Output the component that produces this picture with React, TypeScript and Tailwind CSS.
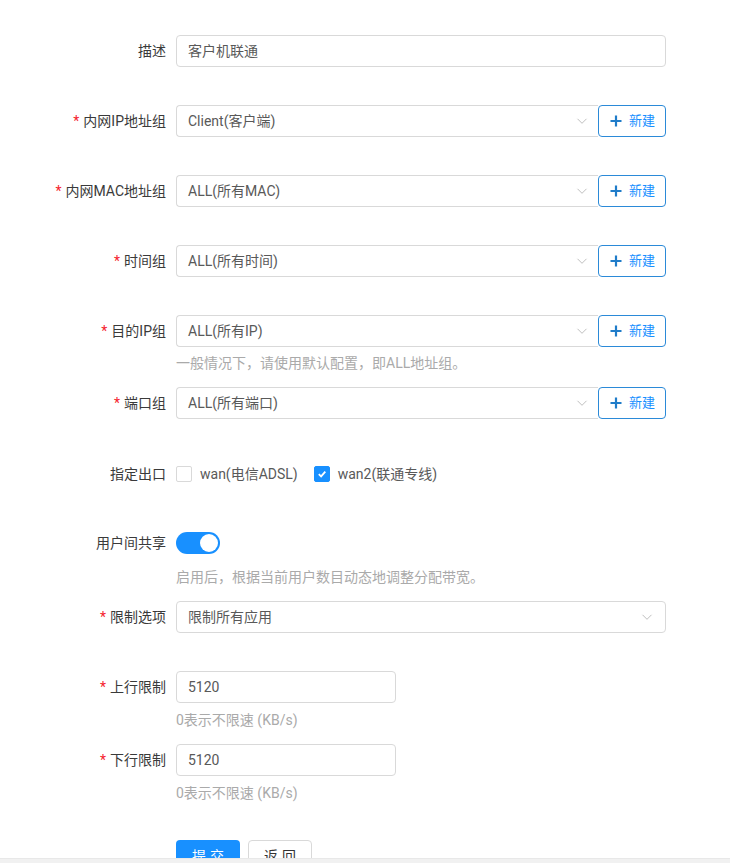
import { ReactNode } from "react";

function Label({ text, required }: { text: string; required?: boolean }) {
  return (
    <div className="w-[166px] shrink-0 h-8 flex items-center justify-end pr-0 text-[14px] text-[#3a3a3a]">
      {required && <span className="text-[#f5222d] mr-1 text-[14px] font-[SimSun,'Liberation Sans',sans-serif]">*</span>}
      <span>{text}</span>
    </div>
  );
}

function Item({ label, required, className, children }: { label: string; required?: boolean; className?: string; children: ReactNode }) {
  return (
    <div className={`flex ${className ?? ""}`}>
      <Label text={label} required={required} />
      <div className="ml-[10px] flex-1">{children}</div>
    </div>
  );
}

function Chevron() {
  return (
    <svg width="12" height="12" viewBox="0 0 12 12" className="text-[#bfbfbf]">
      <path d="M1.5 3.8 L6 8.3 L10.5 3.8" fill="none" stroke="currentColor" strokeWidth="1" />
    </svg>
  );
}

function SelectWithAdd({ value }: { value: string }) {
  return (
    <div className="flex w-[490px] h-8">
      <div className="flex-1 flex items-center justify-between pl-[11px] pr-[10px] border border-[#d9d9d9] border-r-0 rounded-l text-[#595959]">
        <span>{value}</span>
        <Chevron />
      </div>
      <button className="w-[68px] h-8 flex items-center justify-center gap-[6px] border border-[#2b8ad8] rounded bg-white text-[#1890ff]">
        <svg width="14" height="14" viewBox="0 0 14 14">
          <path d="M7 1.5 V12.5 M1.5 7 H12.5" stroke="#1f7cc9" strokeWidth="2.2" />
        </svg>
        <span className="text-[13px]">新建</span>
      </button>
    </div>
  );
}

function Help({ text, className }: { text: string; className?: string }) {
  return <div className={`h-[22px] leading-[22px] text-[14px] text-[#aaa] ${className ?? ""}`}>{text}</div>;
}

function Checkbox({ checked, label }: { checked?: boolean; label: string }) {
  return (
    <label className="flex items-center mr-4">
      <span
        className={`w-4 h-4 rounded-[2px] border flex items-center justify-center ${
          checked ? "bg-[#1890ff] border-[#1890ff]" : "bg-white border-[#d9d9d9]"
        }`}
      >
        {checked && (
          <svg width="10" height="10" viewBox="0 0 10 10">
            <path d="M1.8 5.2 L4.1 7.4 L8.3 2.6" fill="none" stroke="white" strokeWidth="1.8" />
          </svg>
        )}
      </span>
      <span className="ml-[8px] text-[#595959]">{label}</span>
    </label>
  );
}

export default function App() {
  return (
    <div className="min-h-[1000px] bg-white text-[14px] font-['Roboto','Noto_Sans_CJK_SC',sans-serif]">
      <div className="pt-[35px] pb-[100px]">
        <Item label="描述">
          <div className="w-[490px] h-8 flex items-center px-[11px] border border-[#d9d9d9] rounded text-[#595959]">客户机联通</div>
        </Item>

        <Item label="内网IP地址组" required className="mt-[38px]">
          <SelectWithAdd value="Client(客户端)" />
        </Item>

        <Item label="内网MAC地址组" required className="mt-[38px]">
          <SelectWithAdd value="ALL(所有MAC)" />
        </Item>

        <Item label="时间组" required className="mt-[38px]">
          <SelectWithAdd value="ALL(所有时间)" />
        </Item>

        <Item label="目的IP组" required className="mt-[38px]">
          <SelectWithAdd value="ALL(所有IP)" />
          <Help text="一般情况下，请使用默认配置，即ALL地址组。" className="mt-[5px]" />
        </Item>

        <Item label="端口组" required className="mt-[13px]">
          <SelectWithAdd value="ALL(所有端口)" />
        </Item>

        <Item label="指定出口" className="mt-[39px]">
          <div className="h-8 flex items-center">
            <Checkbox label="wan(电信ADSL)" />
            <Checkbox checked label="wan2(联通专线)" />
          </div>
        </Item>

        <Item label="用户间共享" className="mt-[37px]">
          <div className="h-8 flex items-center">
            <span className="relative w-[44px] h-[22px] rounded-full bg-[#1890ff]">
              <span className="absolute right-[2px] top-[2px] w-[18px] h-[18px] rounded-full bg-white" />
            </span>
          </div>
          <Help text="启用后，根据当前用户数目动态地调整分配带宽。" className="mt-[7px]" />
        </Item>

        <Item label="限制选项" required className="mt-[13px]">
          <div className="w-[490px] h-8 flex items-center justify-between pl-[11px] pr-[12px] border border-[#d9d9d9] rounded text-[#595959]">
            <span>限制所有应用</span>
            <Chevron />
          </div>
        </Item>

        <Item label="上行限制" required className="mt-[38px]">
          <div className="w-[220px] h-8 flex items-center px-[11px] border border-[#d9d9d9] rounded text-[#595959]">5120</div>
          <Help text="0表示不限速 (KB/s)" className="mt-[6px]" />
        </Item>

        <Item label="下行限制" required className="mt-[13px]">
          <div className="w-[220px] h-8 flex items-center px-[11px] border border-[#d9d9d9] rounded text-[#595959]">5120</div>
          <Help text="0表示不限速 (KB/s)" className="mt-[6px]" />
        </Item>

        <div className="flex mt-[36px] ml-[176px] gap-2">
          <button className="w-16 h-8 rounded bg-[#1890ff] text-white tracking-[4px] pl-1">提交</button>
          <button className="w-16 h-8 rounded border border-[#d9d9d9] bg-white text-[#333] tracking-[4px] pl-1">返回</button>
        </div>
      </div>
      <div className="fixed left-0 right-0 bottom-0 h-[5px] bg-[#f1f1f1] border-t border-[#e8e8e8]" />
    </div>
  );
}
